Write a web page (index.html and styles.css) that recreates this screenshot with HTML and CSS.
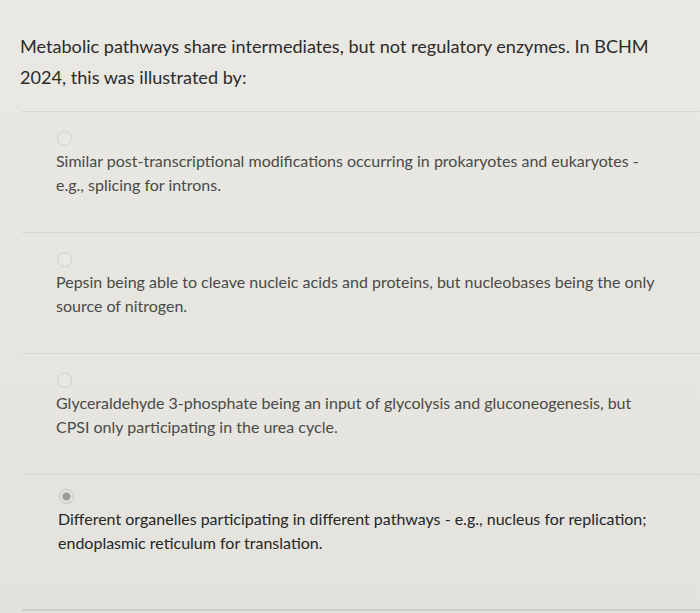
FILE: index.html
```html
<!DOCTYPE html>
<html>
<head>
<meta charset="utf-8">
<link rel="stylesheet" href="styles.css">
</head>
<body>
<div class="page">
  <div class="question">Metabolic pathways share intermediates, but not regulatory enzymes. In BCHM 2024, this was illustrated by:</div>
  <div class="answers">
    <div class="option">
      <span class="radio"></span>
      <div class="label">Similar post-transcriptional modifications occurring in prokaryotes and eukaryotes - e.g., splicing for introns.</div>
    </div>
    <div class="option">
      <span class="radio"></span>
      <div class="label">Pepsin being able to cleave nucleic acids and proteins, but nucleobases being the only source of nitrogen.</div>
    </div>
    <div class="option">
      <span class="radio"></span>
      <div class="label">Glyceraldehyde 3-phosphate being an input of glycolysis and gluconeogenesis, but CPSI only participating in the urea cycle.</div>
    </div>
    <div class="option selected">
      <span class="radio"></span>
      <div class="label">Different organelles participating in different pathways - e.g., nucleus for replication; endoplasmic reticulum for translation.</div>
    </div>
  </div>
</div>
</body>
</html>
```
FILE: styles.css
```css
html, body {
  margin: 0;
  padding: 0;
}
body {
  width: 700px;
  height: 613px;
  overflow: hidden;
  background: linear-gradient(180deg, #e9e8e3 0%, #e6e5df 60%, #e3e2dc 100%);
  font-family: Lato, "Open Sans", sans-serif;
}
.page {
  padding-top: 31px;
}
.question {
  padding-left: 20px;
  width: 670px;
  font-size: 18.1px;
  line-height: 31px;
  color: #2b2b2b;
  height: 80px;
}
.answers {
  margin-left: 22px;
  border-bottom: 2px solid #d0cfc9;
}
.option {
  border-top: 1px solid #d6d5cf;
  height: 121px;
  padding-left: 34px;
  box-sizing: border-box;
  padding-top: 19px;
}
.option.selected {
  height: 135px;
  padding-top: 14px;
  padding-left: 36px;
}
.radio {
  display: block;
  width: 13px;
  height: 13px;
  margin-left: 1px;
  border: 1px solid #d0cfca;
  border-radius: 50%;
  background: #e9e8e3;
}
.label {
  margin-top: 3px;
  font-size: 16px;
  line-height: 24px;
  color: #4a4a48;
  width: 610px;
}
.selected .label {
  color: #262626;
}
.selected .radio {
  border-color: #c4c3be;
  background: radial-gradient(circle, #9d9c98 0 3.5px, #e4e3de 4.5px);
}
```
